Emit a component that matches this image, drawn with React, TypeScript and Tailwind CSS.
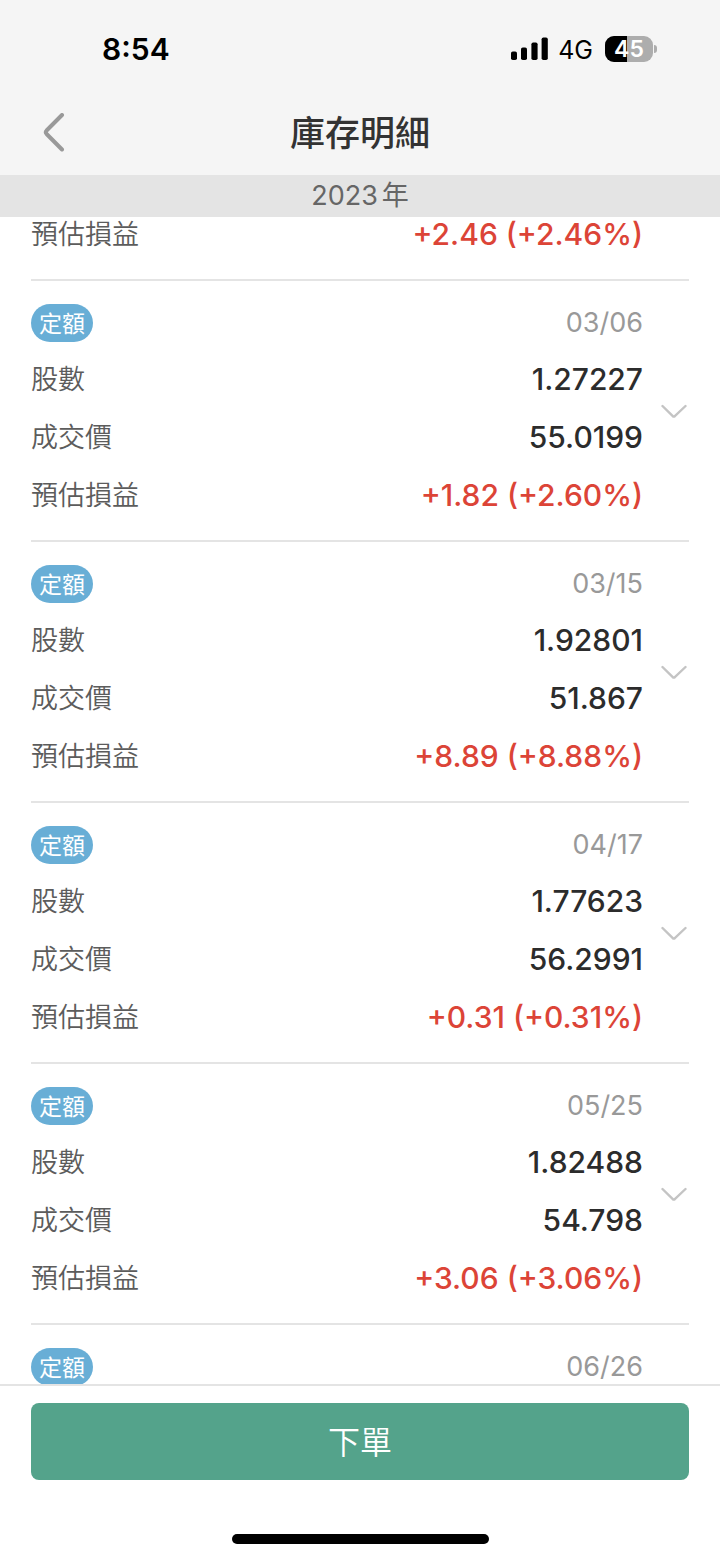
interface Holding {
    date: string;
    shares?: string;
    price?: string;
    profit?: string;
}

const holdings: Holding[] = [
    { date: '03/06', shares: '1.27227', price: '55.0199', profit: '+1.82 (+2.60%)' },
    { date: '03/15', shares: '1.92801', price: '51.867', profit: '+8.89 (+8.88%)' },
    { date: '04/17', shares: '1.77623', price: '56.2991', profit: '+0.31 (+0.31%)' },
    { date: '05/25', shares: '1.82488', price: '54.798', profit: '+3.06 (+3.06%)' },
    { date: '06/26' },
];

function StatusBar() {
    return (
        <div className="flex h-[97px] items-center justify-between pl-[102px] pr-[63px] text-black">
            <span className="text-[30px] font-semibold leading-none">8:54</span>
            <div className="flex items-center">
                <svg className="h-6 w-[37px]" viewBox="0 0 37 24" fill="currentColor" aria-hidden="true">
                    <rect x="0" y="14.5" width="6" height="8.5" rx="1.8" />
                    <rect x="10" y="10.5" width="6" height="12.5" rx="1.8" />
                    <rect x="20.4" y="5.5" width="6.2" height="17.5" rx="1.8" />
                    <rect x="30.6" y="0.5" width="6.2" height="22.5" rx="1.8" />
                </svg>
                <span className="ml-2.5 pt-[3px] text-[25px] leading-none">4G</span>
                <div className="ml-3 flex items-center">
                    <div className="relative h-[26px] w-12 overflow-hidden rounded-[9px] bg-[#adadad]">
                        <div className="absolute inset-y-0 left-0 w-[45%] bg-black" />
                        <span className="absolute inset-0 text-center text-[23px] font-semibold leading-[26px] text-white">
                            45
                        </span>
                    </div>
                    <div className="ml-px h-2 w-[3px] rounded-r-full bg-[#adadad]" />
                </div>
            </div>
        </div>
    );
}

function Header() {
    return (
        <header className="bg-[#f5f5f5]">
            <StatusBar />
            <div className="grid h-[78px] grid-cols-[1fr_auto_1fr] items-center px-[42px] pb-1.5">
                <button type="button" aria-label="返回" className="justify-self-start text-[#999999]">
                    <svg
                        className="h-10 w-6"
                        viewBox="0 0 24 40"
                        fill="none"
                        stroke="currentColor"
                        strokeWidth="4"
                        strokeLinecap="round"
                        strokeLinejoin="round"
                    >
                        <path d="M20 2 L4.6 17.5 Q3 19.3 4.6 21 L20 36.5" />
                    </svg>
                </button>
                <h1 className="text-[35px] font-medium leading-none text-[#333333]">庫存明細</h1>
            </div>
        </header>
    );
}

function Row({ label, value, highlight }: { label: string; value: string; highlight?: boolean }) {
    return (
        <div className="flex h-[58px] items-center justify-between">
            <dt className="pt-0.5 text-[27px] font-[350] text-[#5c5c5c]">{label}</dt>
            <dd
                className={
                    highlight
                        ? 'text-[30px] font-medium text-[#dc4437]'
                        : 'text-[30px] font-medium text-[#2c2c2c]'
                }
            >
                {value}
            </dd>
        </div>
    );
}

function HoldingItem({ holding }: { holding: Holding }) {
    return (
        <li className="flex items-center border-b-2 border-[#e4e4e4] pb-4 pt-[23px]">
            <div className="mr-[18px] flex-1">
                <div className="flex h-[38px] items-center justify-between">
                    <span className="flex h-full items-center rounded-full bg-[#68aed6] px-2 pt-0.5 text-[23px] text-white">
                        定額
                    </span>
                    <time className="text-[27px] text-[#999999]">{holding.date}</time>
                </div>
                {holding.shares && holding.price && holding.profit && (
                    <dl className="mt-2">
                        <Row label="股數" value={holding.shares} />
                        <Row label="成交價" value={holding.price} />
                        <Row label="預估損益" value={holding.profit} highlight />
                    </dl>
                )}
            </div>
            <button
                type="button"
                aria-label="展開"
                className={holding.shares ? 'w-7 pb-1 text-[#c4c4c4]' : 'invisible w-7'}
            >
                <svg
                    className="h-4 w-7"
                    viewBox="0 0 28 16"
                    fill="none"
                    stroke="currentColor"
                    strokeWidth="2.4"
                    strokeLinecap="round"
                    strokeLinejoin="round"
                >
                    <path d="M1.5 2 L11.8 12.2 Q12.8 13 13.8 12.2 L24.5 2" />
                </svg>
            </button>
        </li>
    );
}

export default function App() {
    return (
        <div className="flex h-screen flex-col bg-white font-[Inter,'Noto_Sans_CJK_TC',sans-serif]">
            <Header />
            <h2 className="flex h-[42px] shrink-0 items-center justify-center gap-1 bg-[#e4e4e4] text-[27px] text-[#666666]">
                <span>2023</span>
                <span>年</span>
            </h2>

            <main className="min-h-0 flex-1 overflow-y-auto px-[31px] [scrollbar-width:none]">
                <ul className="-mt-3">
                    <li className="border-b-2 border-[#e4e4e4] pb-4 pr-[46px]">
                        <dl>
                            <Row label="預估損益" value="+2.46 (+2.46%)" highlight />
                        </dl>
                    </li>
                    {holdings.map((holding) => (
                        <HoldingItem key={holding.date} holding={holding} />
                    ))}
                </ul>
            </main>

            <footer className="border-t-2 border-[#e4e4e4] px-[31px] pb-[15px] pt-[17px]">
                <button
                    type="button"
                    className="h-[77px] w-full rounded-lg bg-[#54a38b] pt-0.5 text-[32px] font-[350] text-white"
                >
                    下單
                </button>
                <div className="mx-auto mt-[54px] h-[10px] w-[257px] rounded-full bg-black" />
            </footer>
        </div>
    );
}
